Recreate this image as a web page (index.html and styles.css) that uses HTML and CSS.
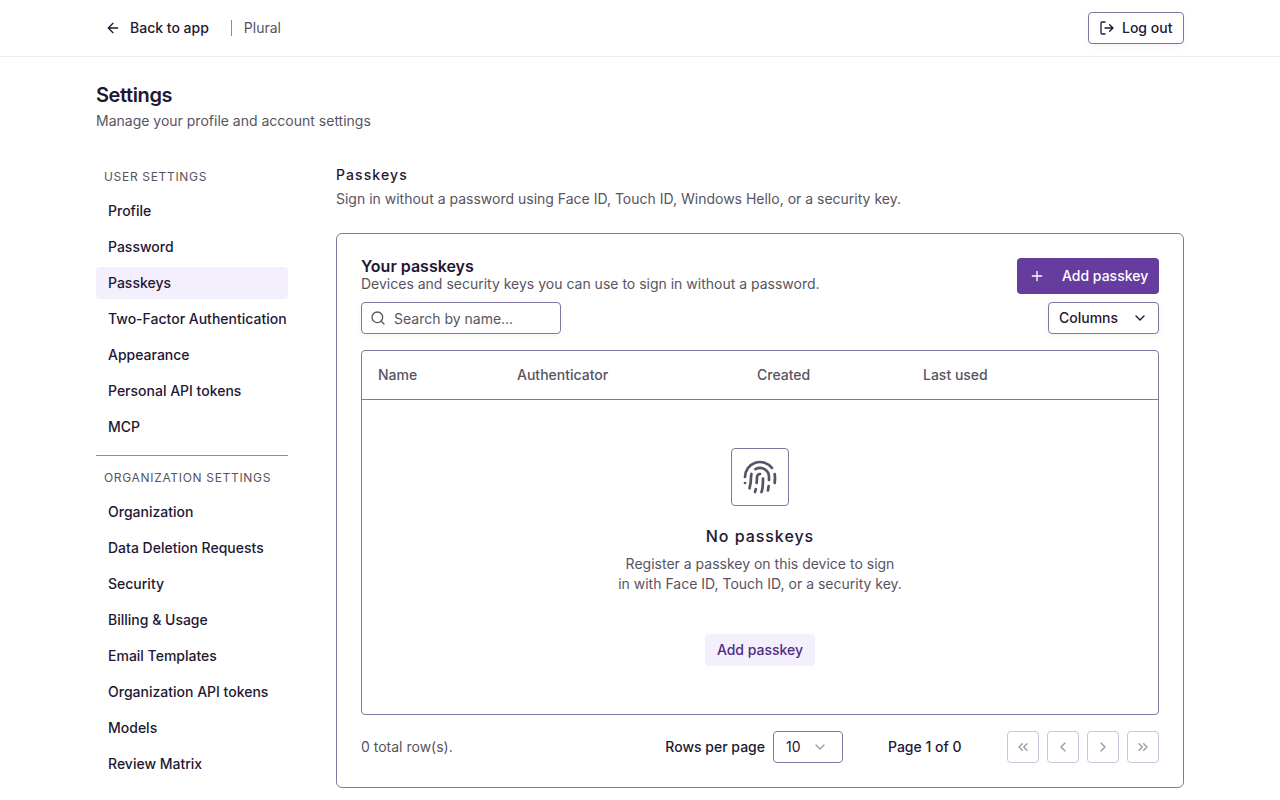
FILE: index.html
```html
<!DOCTYPE html>
<html lang="en">
<head>
<meta charset="UTF-8">
<meta name="viewport" content="width=device-width, initial-scale=1.0">
<title>Settings</title>
<link rel="stylesheet" href="styles.css">
</head>
<body>

<header class="topbar">
  <div class="topbar-left">
    <a class="back-link">
      <svg class="icon" width="16" height="16" viewBox="0 0 24 24"><path d="M19 12H5M12 19l-7-7 7-7"/></svg>
      <span>Back to app</span>
    </a>
    <span class="topbar-org">Plural</span>
  </div>
  <button class="btn-outline logout-btn">
    <svg class="icon" width="16" height="16" viewBox="0 0 24 24"><path d="M9 21H5a2 2 0 0 1-2-2V5a2 2 0 0 1 2-2h4M16 17l5-5-5-5M21 12H9"/></svg>
    Log out
  </button>
</header>

<div class="page">
  <div class="page-title">
    <h1>Settings</h1>
    <p>Manage your profile and account settings</p>
  </div>

  <div class="layout">
    <nav class="sidebar">
      <div class="nav-label">User settings</div>
      <a class="nav-item">Profile</a>
      <a class="nav-item">Password</a>
      <a class="nav-item active">Passkeys</a>
      <a class="nav-item">Two-Factor Authentication</a>
      <a class="nav-item">Appearance</a>
      <a class="nav-item">Personal API tokens</a>
      <a class="nav-item">MCP</a>
      <hr class="nav-divider">
      <div class="nav-label">Organization settings</div>
      <a class="nav-item">Organization</a>
      <a class="nav-item">Data Deletion Requests</a>
      <a class="nav-item">Security</a>
      <a class="nav-item">Billing &amp; Usage</a>
      <a class="nav-item">Email Templates</a>
      <a class="nav-item">Organization API tokens</a>
      <a class="nav-item">Models</a>
      <a class="nav-item">Review Matrix</a>
    </nav>

    <main class="content">
      <h2>Passkeys</h2>
      <p class="content-desc">Sign in without a password using Face ID, Touch ID, Windows Hello, or a security key.</p>

      <section class="card">
        <div class="card-head">
          <div class="card-title">
            <h3>Your passkeys</h3>
            <p>Devices and security keys you can use to sign in without a password.</p>
          </div>
          <button class="btn-primary">
            <svg class="icon" width="16" height="16" viewBox="0 0 24 24"><path d="M5 12h14M12 5v14"/></svg>
            Add passkey
          </button>
        </div>

        <div class="toolbar">
          <div class="search">
            <svg class="icon" width="16" height="16" viewBox="0 0 24 24"><circle cx="11" cy="11" r="8"/><path d="m21 21-4.3-4.3"/></svg>
            <span>Search by name...</span>
          </div>
          <button class="btn-outline columns-btn">
            Columns
            <svg class="icon" width="16" height="16" viewBox="0 0 24 24"><path d="m6 9 6 6 6-6"/></svg>
          </button>
        </div>

        <div class="table">
          <div class="table-head">
            <span class="col-name">Name</span>
            <span class="col-auth">Authenticator</span>
            <span class="col-created">Created</span>
            <span>Last used</span>
          </div>
          <div class="empty">
            <div class="empty-icon">
              <svg class="icon" width="36" height="36" viewBox="0 0 24 24"><path d="M12 10a2 2 0 0 0-2 2c0 1.02-.1 2.51-.26 4"/><path d="M14 13.12c0 2.38 0 6.38-1 8.88"/><path d="M17.29 21.02c.12-.6.43-2.3.5-3.02"/><path d="M2 12a10 10 0 0 1 18-6"/><path d="M2 16h.01"/><path d="M21.8 16c.2-2 .131-5.354 0-6"/><path d="M5 19.5C5.5 18 6 15 6 12a6 6 0 0 1 .34-2"/><path d="M8.65 22c.21-.66.45-1.32.57-2"/><path d="M9 6.8a6 6 0 0 1 9 5.2v2"/></svg>
            </div>
            <h4>No passkeys</h4>
            <p>Register a passkey on this device to sign<br>in with Face ID, Touch ID, or a security key.</p>
            <button class="btn-soft">Add passkey</button>
          </div>
        </div>

        <div class="table-foot">
          <span class="row-count">0 total row(s).</span>
          <div class="pager">
            <div class="rows-per-page">
              <span>Rows per page</span>
              <div class="rows-select">
                10
                <svg class="icon" width="16" height="16" viewBox="0 0 24 24"><path d="m6 9 6 6 6-6"/></svg>
              </div>
            </div>
            <span class="page-of">Page 1 of 0</span>
            <div class="pager-btns">
              <button class="pager-btn"><svg class="icon" width="16" height="16" viewBox="0 0 24 24"><path d="m11 17-5-5 5-5M18 17l-5-5 5-5"/></svg></button>
              <button class="pager-btn"><svg class="icon" width="16" height="16" viewBox="0 0 24 24"><path d="m15 18-6-6 6-6"/></svg></button>
              <button class="pager-btn"><svg class="icon" width="16" height="16" viewBox="0 0 24 24"><path d="m9 18 6-6-6-6"/></svg></button>
              <button class="pager-btn"><svg class="icon" width="16" height="16" viewBox="0 0 24 24"><path d="m6 17 5-5-5-5M13 17l5-5-5-5"/></svg></button>
            </div>
          </div>
        </div>
      </section>
    </main>
  </div>
</div>

</body>
</html>
```

FILE: styles.css
```css
* {
  box-sizing: border-box;
}
html, body {
  height: 800px;
  overflow: hidden;
}
body {
  margin: 0;
  background-color: #fff;
  color: #1e1833;
  font-family: Inter, 'Noto Sans', sans-serif;
  font-size: 14px;
  line-height: 20px;
}
h1, h2, h3, h4, p {
  margin: 0;
}
button {
  font-family: inherit;
  font-size: 14px;
  line-height: 20px;
  color: inherit;
  cursor: pointer;
}
.icon {
  fill: none;
  stroke: currentColor;
  stroke-width: 2;
  stroke-linecap: round;
  stroke-linejoin: round;
  flex-shrink: 0;
}

/* top bar */
.topbar {
  height: 57px;
  border-bottom: 1px solid #eeedf3;
  padding: 0 96px;
  display: flex;
  align-items: center;
  justify-content: space-between;
}
.topbar-left {
  display: flex;
  align-items: center;
}
.back-link {
  display: flex;
  align-items: center;
  gap: 9px;
  padding-left: 9px;
  font-weight: 500;
}
.topbar-org {
  margin-left: 22px;
  padding-left: 12px;
  border-left: 1px solid #8f8aa3;
  height: 16px;
  line-height: 16px;
  color: #57545f;
}
.btn-outline {
  display: flex;
  align-items: center;
  height: 32px;
  background: #fff;
  border: 1px solid #7f78a3;
  border-radius: 4px;
  font-weight: 500;
  box-shadow: 0 2px 6px rgba(60, 40, 120, 0.06);
}
.logout-btn {
  width: 96px;
  padding: 0 10px;
  gap: 7px;
}

/* page */
.page {
  padding: 27px 96px 0;
}
.page-title h1 {
  font-size: 20px;
  line-height: 22px;
  font-weight: 600;
  letter-spacing: -0.4px;
}
.page-title p {
  margin-top: 5px;
  color: #57545f;
}
.layout {
  display: flex;
  gap: 48px;
  margin-top: 28px;
}

/* sidebar */
.sidebar {
  width: 192px;
  flex-shrink: 0;
  display: flex;
  flex-direction: column;
  gap: 4px;
}
.nav-label {
  height: 32px;
  padding: 2px 8px 0;
  font-size: 12px;
  line-height: 32px;
  letter-spacing: 0.68px;
  text-transform: uppercase;
  color: #57545f;
}
.nav-item {
  height: 32px;
  padding: 0 12px;
  border-radius: 4px;
  line-height: 32px;
  font-weight: 500;
  white-space: nowrap;
}
.nav-item.active {
  background-color: #f3effc;
}
.nav-divider {
  width: 100%;
  margin: 8px 0 0;
  border: 0;
  border-top: 1px solid #8f8aa3;
}

/* content */
.content {
  flex: 1;
  min-width: 0;
  padding-top: 8px;
}
.content h2 {
  font-size: 14px;
  line-height: 16px;
  font-weight: 500;
  letter-spacing: 1.1px;
}
.content-desc {
  margin-top: 6px;
  color: #57545f;
}
.card {
  margin-top: 24px;
  height: 555px;
  border: 1px solid #7f78a3;
  border-radius: 6px;
  padding: 24px;
}
.card-head {
  display: flex;
  justify-content: space-between;
  align-items: flex-start;
}
.card-title {
  margin-top: -1px;
}
.card-head h3 {
  font-size: 16px;
  line-height: 18px;
  font-weight: 600;
}
.card-head p {
  color: #57545f;
  line-height: 18px;
}
.btn-primary {
  display: flex;
  align-items: center;
  gap: 17px;
  height: 36px;
  width: 142px;
  padding: 0 0 0 12px;
  border: 0;
  border-radius: 4px;
  background-color: #663c9f;
  color: #fff;
  font-weight: 500;
  white-space: nowrap;
}
.toolbar {
  display: flex;
  justify-content: space-between;
  margin-top: 8px;
}
.search {
  display: flex;
  align-items: center;
  gap: 8px;
  width: 200px;
  height: 32px;
  padding: 0 8px;
  border: 1px solid #7f78a3;
  border-radius: 4px;
  color: #57545f;
  box-shadow: 0 2px 6px rgba(60, 40, 120, 0.05);
}
.search span {
  padding-top: 1px;
}
.columns-btn {
  width: 111px;
  padding: 0 10px;
  justify-content: space-between;
}

/* table */
.table {
  margin-top: 16px;
  height: 365px;
  border: 1px solid #7f78a3;
  border-radius: 4px;
}
.table-head {
  display: flex;
  align-items: center;
  height: 49px;
  padding: 0 16px;
  border-bottom: 1px solid #7f78a3;
  color: #57545f;
  font-weight: 500;
}
.col-name {
  width: 139px;
}
.col-auth {
  width: 240px;
}
.col-created {
  width: 166px;
}
.empty {
  display: flex;
  flex-direction: column;
  align-items: center;
  padding-top: 48px;
  text-align: center;
}
.empty-icon {
  width: 58px;
  height: 58px;
  display: flex;
  align-items: center;
  justify-content: center;
  border: 1px solid #7f78a3;
  border-radius: 4px;
  color: #57545f;
}
.empty-icon .icon {
  stroke-width: 1.8;
}
.empty h4 {
  margin-top: 20px;
  font-size: 16px;
  line-height: 20px;
  font-weight: 500;
  letter-spacing: 0.95px;
}
.empty p {
  margin-top: 8px;
  color: #57545f;
}
.btn-soft {
  margin-top: 40px;
  height: 32px;
  width: 110px;
  padding: 0;
  border: 0;
  border-radius: 4px;
  background-color: #f3effc;
  color: #4e2d80;
  font-weight: 500;
}

/* footer */
.table-foot {
  display: flex;
  justify-content: space-between;
  align-items: center;
  margin-top: 16px;
}
.row-count {
  color: #57545f;
}
.pager {
  display: flex;
  align-items: center;
}
.rows-per-page {
  display: flex;
  align-items: center;
  gap: 8px;
  font-weight: 500;
}
.rows-select {
  display: flex;
  align-items: center;
  justify-content: space-between;
  width: 70px;
  height: 32px;
  padding: 0 14px 0 12px;
  border: 1px solid #7f78a3;
  border-radius: 4px;
  font-weight: 400;
}
.rows-select .icon {
  color: #a09dab;
}
.page-of {
  margin-left: 45px;
  width: 119px;
  font-weight: 500;
}
.pager-btns {
  display: flex;
  gap: 8px;
}
.pager-btn {
  width: 32px;
  height: 32px;
  padding: 0;
  display: flex;
  align-items: center;
  justify-content: center;
  background: #fff;
  border: 1px solid #c9c6d9;
  border-radius: 4px;
  color: #9a97a8;
}
```
